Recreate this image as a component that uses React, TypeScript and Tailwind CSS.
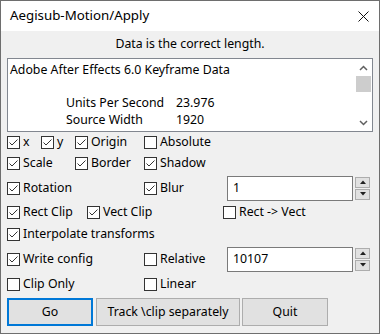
import React from "react";

const font = { fontFamily: '"Noto Sans", "Open Sans", sans-serif' };

function Check({ checked }: { checked: boolean }) {
  return (
    <svg width="13" height="13" viewBox="0 0 13 13" className="shrink-0">
      <rect x="0.5" y="0.5" width="12" height="12" fill="#ffffff" stroke="#333333" />
      {checked && (
        <path d="M2.5 6.5 L5 9 L10.5 3.5" fill="none" stroke="#333333" strokeWidth="1" />
      )}
    </svg>
  );
}

function CB({ label, checked, w }: { label: string; checked: boolean; w?: string }) {
  return (
    <div className={`flex items-center gap-[3px] shrink-0 ${w ?? ""}`}>
      <Check checked={checked} />
      <span className="text-[12.3px] leading-none text-[#000]">{label}</span>
    </div>
  );
}

function Spin({ value }: { value: string }) {
  return (
    <div className="flex items-center gap-[2px]">
      <div className="w-[126px] h-[25px] bg-white border border-[#7a7a7a] flex items-center pl-[5px] text-[12.3px]">
        {value}
      </div>
      <div className="flex flex-col gap-[1px]">
        <div className="w-[15px] h-[11px] border border-[#adadad] bg-[#e1e1e1] flex items-center justify-center">
          <svg width="6" height="4" viewBox="0 0 6 4"><path d="M0 4 L3 0.5 L6 4 Z" fill="#222" /></svg>
        </div>
        <div className="w-[15px] h-[11px] border border-[#adadad] bg-[#e1e1e1] flex items-center justify-center">
          <svg width="6" height="4" viewBox="0 0 6 4"><path d="M0 0 L3 3.5 L6 0 Z" fill="#222" /></svg>
        </div>
      </div>
    </div>
  );
}

export default function App() {
  return (
    <div style={font} className="w-[380px] h-[334px] bg-[#f0f0f0] border border-[#6e6e6e] flex flex-col text-black">
      <div className="h-[30px] bg-white flex items-center justify-between pl-[9px] pr-[10px] shrink-0">
        <span className="text-[13.3px]">Aegisub-Motion/Apply</span>
        <svg width="11" height="11" viewBox="0 0 11 11">
          <path d="M0.5 0.5 L10.5 10.5 M10.5 0.5 L0.5 10.5" stroke="#111" strokeWidth="1" />
        </svg>
      </div>
      <div className="flex flex-col px-[6px]">
        <div className="h-[27px] flex items-center justify-center text-[12.3px]">Data is the correct length.</div>
        <div className="h-[74px] bg-white border border-[#828790] flex">
          <div className="flex-1 pl-[2px] pt-[3px] text-[12.3px] leading-[16.7px]">
            <div>Adobe After Effects 6.0 Keyframe Data</div>
            <div>&nbsp;</div>
            <div className="flex"><span className="ml-[56px] w-[110px] shrink-0">Units Per Second</span><span>23.976</span></div>
            <div className="flex"><span className="ml-[56px] w-[110px] shrink-0">Source Width</span><span>1920</span></div>
          </div>
          <div className="w-[17px] bg-white flex flex-col items-center justify-between pt-[6px] pb-[5px]">
            <div className="flex flex-col items-center gap-[5px]">
              <svg width="9" height="6" viewBox="0 0 9 6"><path d="M1 5 L4.5 1.5 L8 5" fill="none" stroke="#606060" strokeWidth="1.5" /></svg>
              <div className="w-[15px] h-[16px] bg-[#cdcdcd]" />
            </div>
            <svg width="9" height="6" viewBox="0 0 9 6"><path d="M1 1 L4.5 4.5 L8 1" fill="none" stroke="#606060" strokeWidth="1.5" /></svg>
          </div>
        </div>
        <div className="h-[21px] flex items-center">
          <CB label="x" checked w="w-[34px]" />
          <CB label="y" checked w="w-[34px]" />
          <CB label="Origin" checked w="w-[69px]" />
          <CB label="Absolute" checked={false} />
        </div>
        <div className="h-[21px] flex items-center">
          <CB label="Scale" checked w="w-[68px]" />
          <CB label="Border" checked w="w-[69px]" />
          <CB label="Shadow" checked />
        </div>
        <div className="h-[28px] flex items-center">
          <CB label="Rotation" checked w="w-[137px]" />
          <CB label="Blur" checked w="w-[83px]" />
          <Spin value="1" />
        </div>
        <div className="h-[21px] flex items-center">
          <CB label="Rect Clip" checked w="w-[80px]" />
          <CB label="Vect Clip" checked w="w-[136px]" />
          <CB label="Rect -> Vect" checked={false} />
        </div>
        <div className="h-[22px] flex items-center">
          <CB label="Interpolate transforms" checked />
        </div>
        <div className="h-[28px] flex items-center">
          <CB label="Write config" checked w="w-[137px]" />
          <CB label="Relative" checked={false} w="w-[83px]" />
          <Spin value="10107" />
        </div>
        <div className="h-[22px] flex items-center">
          <CB label="Clip Only" checked={false} w="w-[137px]" />
          <CB label="Linear" checked={false} />
        </div>
        <div className="flex mt-[3px]">
          <div className="w-[86px] h-[28px] border-2 border-[#0078d7] bg-[#e1e1e1] flex items-center justify-center text-[12.3px]">Go</div>
          <div className="ml-[3px] w-[144px] h-[28px] border border-[#adadad] bg-[#e1e1e1] flex items-center justify-center text-[12.3px]">Track \clip separately</div>
          <div className="ml-[2px] w-[86px] h-[28px] border border-[#adadad] bg-[#e1e1e1] flex items-center justify-center text-[12.3px]">Quit</div>
        </div>
      </div>
    </div>
  );
}
